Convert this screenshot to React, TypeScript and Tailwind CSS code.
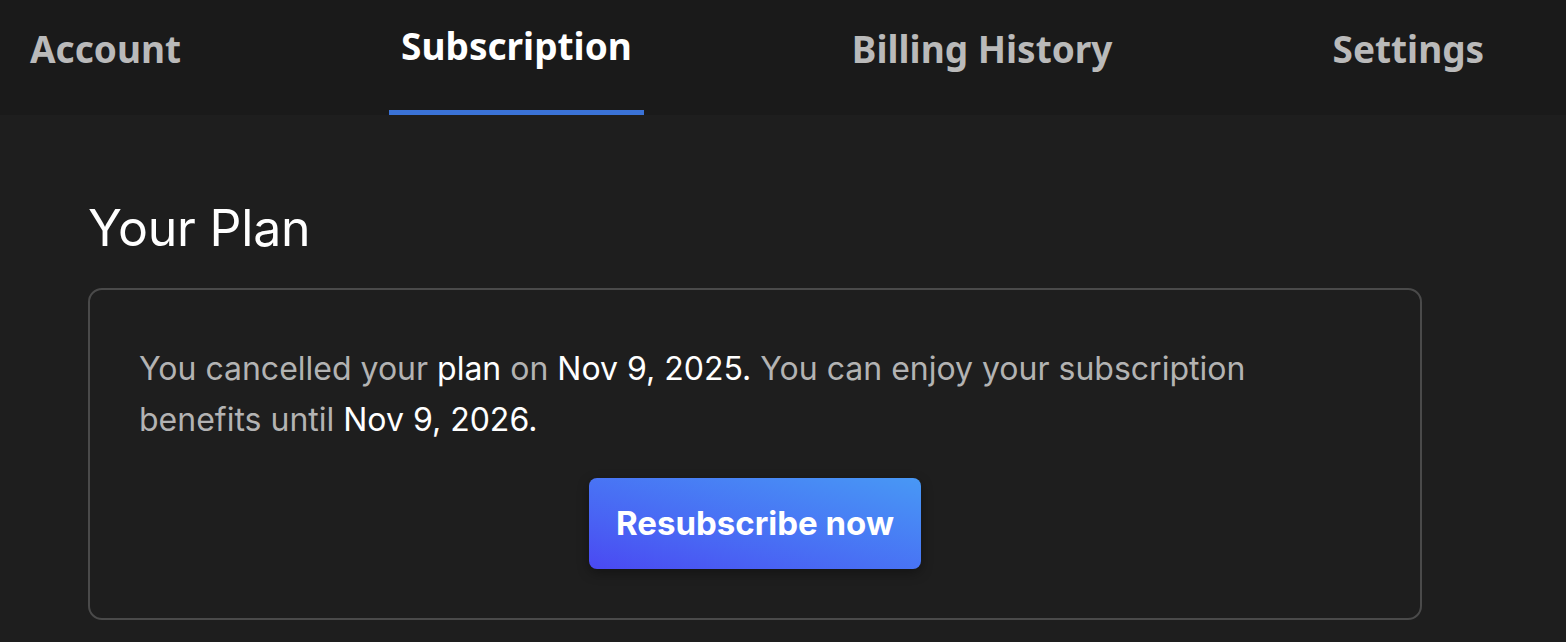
import React from 'react';

const tabs = ['Account', 'Subscription', 'Billing History', 'Settings'];

export default function App() {
    const active = 'Subscription';

    return (
        <div className="min-h-[642px] w-full bg-[#1e1e1e] font-['Inter',sans-serif] overflow-hidden">
            <nav className="flex h-[115px] bg-[#1a1a1a] pl-[18px] gap-[196px]">
                {tabs.map((tab) => {
                    const isActive = tab === active;
                    return (
                        <button
                            key={tab}
                            className={
                                isActive
                                    ? "px-3 pt-[22px] text-left font-['Noto_Sans',sans-serif] text-[37px] font-bold text-white self-stretch flex border-b-[5px] border-[#3a72d6]"
                                    : "px-3 pt-[25px] text-left font-['Noto_Sans',sans-serif] text-[37px] font-bold text-[#bababa] self-stretch flex border-b-[5px] border-transparent"
                            }
                        >
                            <span className="leading-[48px] whitespace-nowrap">{tab}</span>
                        </button>
                    );
                })}
            </nav>

            <main className="pl-[88px] pr-[144px] pt-[84px]">
                <h1 className="text-[50px] leading-[58px] font-normal text-white tracking-[-0.2px]">Your Plan</h1>

                <section className="mt-[31px] rounded-[14px] border-2 border-[#4a4a4a] px-[49px] pt-[53px] pb-[49px]">
                    <p className="text-[32px] leading-[51px] text-[#b3b3b3]">
                        You cancelled your <span className="text-white">plan</span> on{' '}
                        <span className="text-white">Nov 9, 2025.</span> You can enjoy your subscription benefits until{' '}
                        <span className="text-white">Nov 9, 2026.</span>
                    </p>
                    <div className="mt-[33px] flex justify-center">
                        <button className="h-[91px] w-[332px] rounded-[8px] bg-gradient-to-tr from-[#4a48f2] to-[#4898f5] text-[33px] font-bold text-white shadow-[0_4px_12px_rgba(0,0,0,0.35)]">
                            Resubscribe now
                        </button>
                    </div>
                </section>
            </main>
        </div>
    );
}
